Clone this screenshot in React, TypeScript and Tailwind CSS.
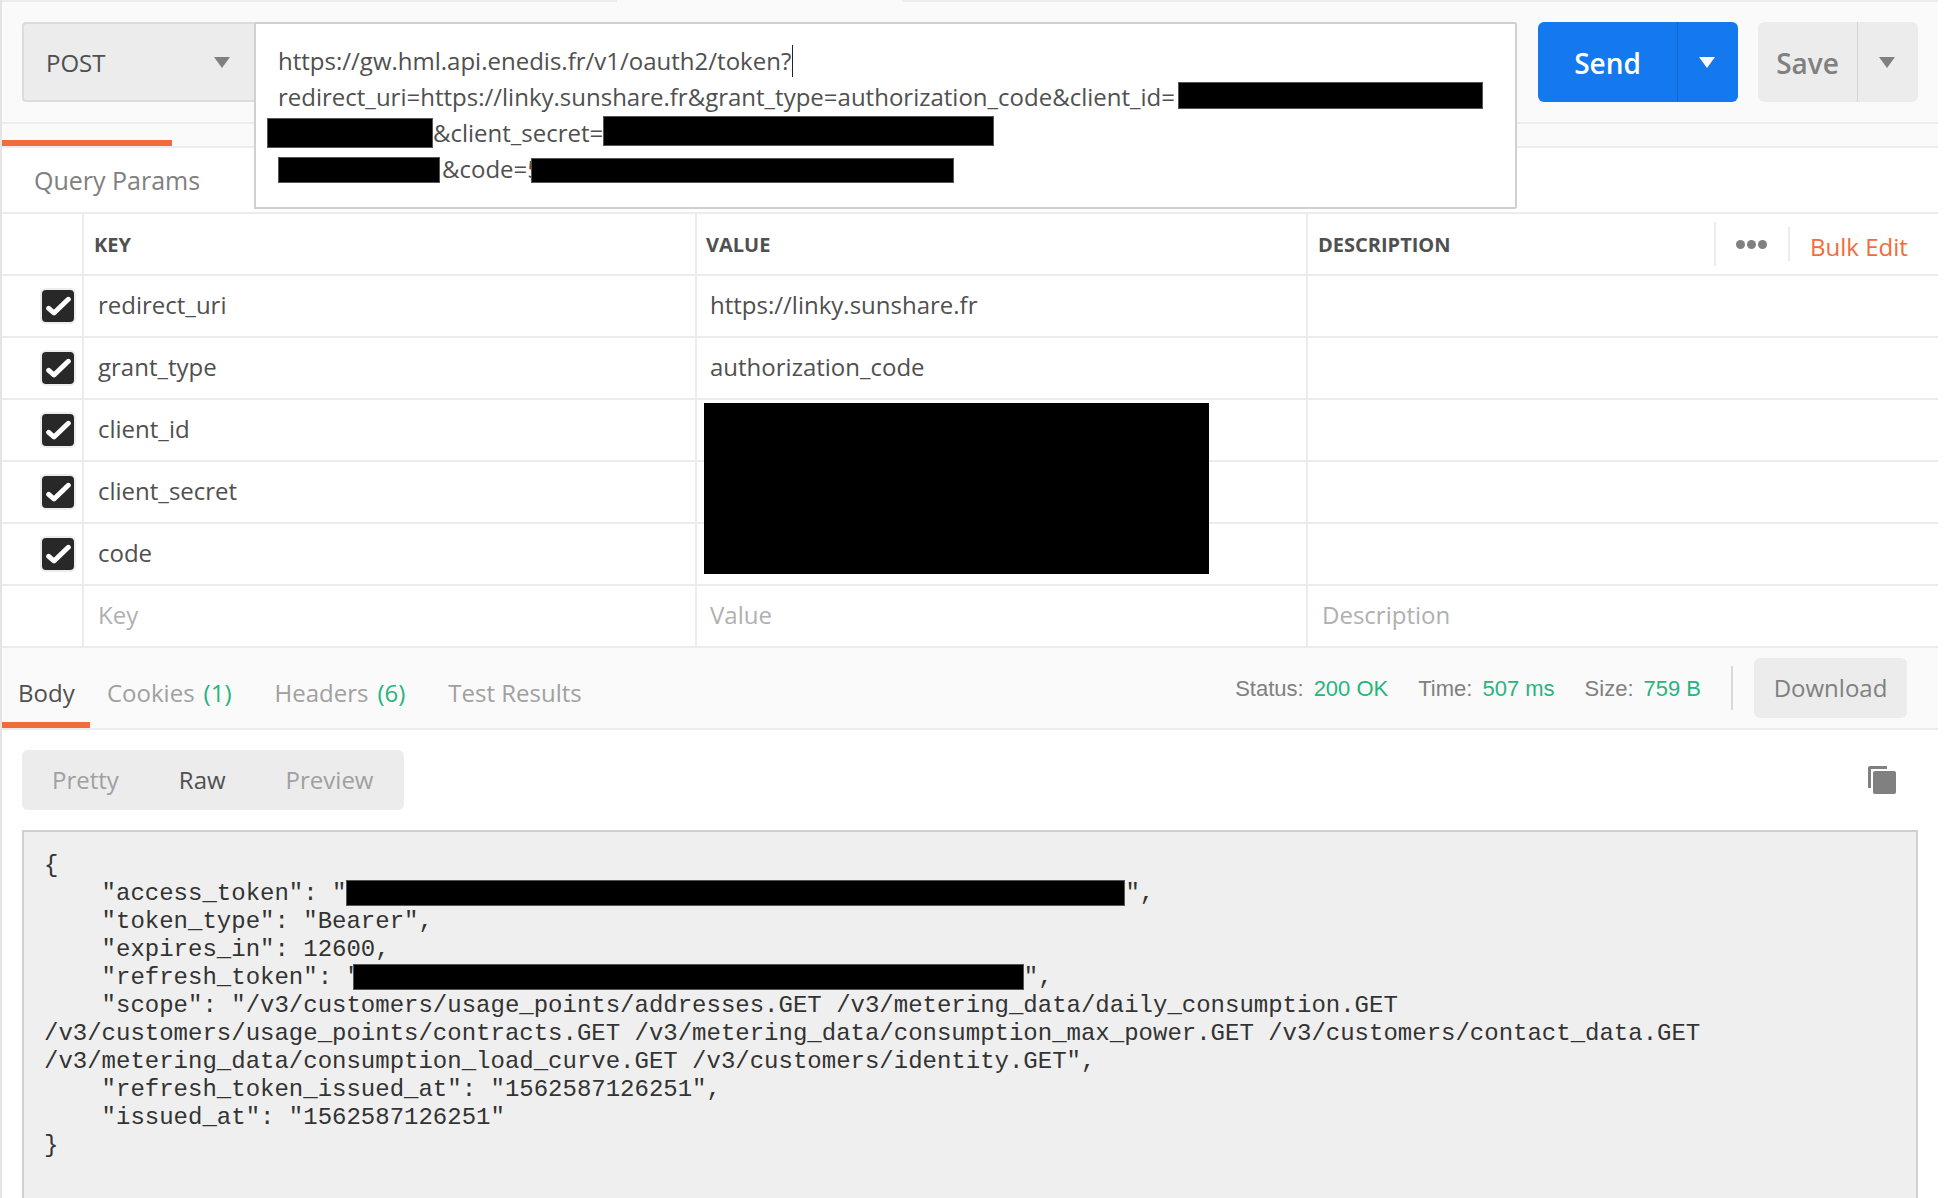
import React from 'react';

const rows = [
  { key: 'redirect_uri', value: 'https://linky.sunshare.fr' },
  { key: 'grant_type', value: 'authorization_code' },
  { key: 'client_id', value: '' },
  { key: 'client_secret', value: '' },
  { key: 'code', value: '' },
];

const responseLines = [
  '{',
  '    "access_token": "',
  '    "token_type": "Bearer",',
  '    "expires_in": 12600,',
  '    "refresh_token": "',
  '    "scope": "/v3/customers/usage_points/addresses.GET /v3/metering_data/daily_consumption.GET',
  '/v3/customers/usage_points/contracts.GET /v3/metering_data/consumption_max_power.GET /v3/customers/contact_data.GET',
  '/v3/metering_data/consumption_load_curve.GET /v3/customers/identity.GET",',
  '    "refresh_token_issued_at": "1562587126251",',
  '    "issued_at": "1562587126251"',
  '}',
];

const Caret = ({ color }: { color: string }) => (
  <svg width="16" height="11" viewBox="0 0 16 11" style={{ fill: color }}>
    <path d="M0 0h16L8 11z" />
  </svg>
);

const Check = () => (
  <span className="flex h-[36px] w-[36px] items-center justify-center rounded-[6px] border-2 border-[#ececec] bg-[#282828]">
    <svg width="26" height="22" viewBox="0 0 26 22" fill="none">
      <path d="M3.7 13.3L9 18L23.3 4.3" stroke="#fff" strokeWidth="5" strokeLinecap="round" strokeLinejoin="round" />
    </svg>
  </span>
);

const Bar = ({ className }: { className: string }) => (
  <span className={`relative inline-block shrink-0 border border-[#555] bg-black ${className}`} />
);

const App = () => {
  return (
    <div className="flex h-[1198px] w-[1944px] overflow-hidden bg-white font-['Open_Sans',sans-serif] text-[24px] text-[#505050]">
      <div className="w-[2px] shrink-0 bg-[#e4e4e4]" />
      <div className="w-[1936px] shrink-0">
        {/* top strip */}
        <div className="flex h-[2px]">
          <div className="w-[615px] bg-[#ececec]" />
          <div className="w-[285px] bg-[#fafafa]" />
          <div className="flex-1 bg-[#ececec]" />
        </div>

        {/* request bar */}
        <div className="flex h-[122px] items-start border-b-2 border-[#ececec] bg-[#fafafa] pl-[20px] pt-[20px]">
          <div className="flex h-[80px] w-[232px] items-center justify-between rounded-l-[4px] border-2 border-r-0 border-[#dcdcdc] bg-[#ececec] pl-[22px] pr-[24px]">
            <span className="pt-[2px] text-[#505050]">POST</span>
            <Caret color="#808080" />
          </div>
          <div className="relative z-10 mb-[-107px] h-[187px] w-[1263px] rounded-r-[2px] border-2 border-[#d0d0d0] bg-white pl-[22px] pt-[19px] leading-[36px]">
            <div className="flex h-[36px] items-center">
              https://gw.hml.api.enedis.fr/v1/oauth2/token?
              <span className="ml-[1px] h-[32px] w-[1px] bg-[#222]" />
            </div>
            <div className="flex h-[36px] items-center whitespace-nowrap">
              redirect_uri=https://linky.sunshare.fr&amp;grant_type=authorization_code&amp;client_id=
              <Bar className="ml-[3px] h-[27px] w-[305px] -translate-y-[2px]" />
            </div>
            <div className="ml-[-11px] flex h-[36px] items-center whitespace-nowrap">
              <Bar className="h-[30px] w-[166px]" />
              &amp;client_secret=
              <Bar className="h-[30px] w-[391px] -translate-y-[2px]" />
            </div>
            <div className="flex h-[36px] items-center whitespace-nowrap">
              <Bar className="h-[26px] w-[162px] translate-y-[1px]" />
              <span className="ml-[2px]">&amp;code=5</span>
              <Bar className="ml-[-10px] h-[25px] w-[423px] translate-y-[1px]" />
            </div>
          </div>
          <div className="ml-[21px] flex h-[80px] w-[200px] rounded-[6px] bg-[#1479ee] text-[28px] font-semibold text-white">
            <div className="flex w-[139px] items-center justify-center pt-[2px]">Send</div>
            <div className="flex flex-1 items-center justify-center border-l border-[#0f69d0] pr-[3px]">
              <Caret color="#fff" />
            </div>
          </div>
          <div className="ml-[20px] flex h-[80px] w-[160px] rounded-[6px] bg-[#ececec] text-[28px] font-semibold text-[#808080]">
            <div className="flex w-[99px] items-center justify-center pt-[2px]">Save</div>
            <div className="flex flex-1 items-center justify-center border-l border-[#d4d4d4] pr-[3px]">
              <Caret color="#808080" />
            </div>
          </div>
        </div>

        {/* params tab strip */}
        <div className="h-[24px] border-b-2 border-[#ececec] bg-[#fafafa] pt-[16px]">
          <div className="h-[6px] w-[170px] bg-[#f26b3a]" />
        </div>
        <div className="flex h-[66px] items-center border-b-2 border-[#ececec] pl-[32px] pt-[2px] text-[25px] text-[#808080]">
          Query Params
        </div>

        {/* params table */}
        <div className="flex h-[62px] border-b-2 border-[#ececec] text-[20px] font-bold">
          <div className="w-[82px] border-r-2 border-[#ececec]" />
          <div className="flex w-[611px] items-center pl-[10px] pt-[2px]">KEY</div>
          <div className="flex w-[611px] items-center border-l-2 border-[#ececec] pl-[9px] pt-[2px]">VALUE</div>
          <div className="flex flex-1 items-center border-l-2 border-[#ececec] pl-[10px]">
            <span className="w-[396px] pt-[2px]">DESCRIPTION</span>
            <span className="flex h-[44px] w-[74px] items-center justify-center gap-[2px] border-l-2 border-[#ececec] pr-[2px]">
              <span className="h-[9px] w-[9px] rounded-full bg-[#808080]" />
              <span className="h-[9px] w-[9px] rounded-full bg-[#808080]" />
              <span className="h-[9px] w-[9px] rounded-full bg-[#808080]" />
            </span>
            <span className="flex h-[34px] items-center border-l-2 border-[#ececec] pl-[20px] pt-[6px] text-[24px] font-normal text-[#f26b3a]">
              Bulk Edit
            </span>
          </div>
        </div>
        <div className="relative">
          {rows.map((row) => (
            <div key={row.key} className="flex h-[62px] border-b-2 border-[#ececec]">
              <div className="flex w-[82px] items-center justify-end border-r-2 border-[#ececec] pr-[6px]">
                <Check />
              </div>
              <div className="flex w-[611px] items-center pb-[2px] pl-[14px]">{row.key}</div>
              <div className="flex w-[611px] items-center border-l-2 border-[#ececec] pb-[2px] pl-[13px]">{row.value}</div>
              <div className="flex-1 border-l-2 border-[#ececec]" />
            </div>
          ))}
          <div className="flex h-[62px] border-b-2 border-[#ececec] text-[#b0b0b0]">
            <div className="w-[82px] border-r-2 border-[#ececec]" />
            <div className="flex w-[611px] items-center pb-[2px] pl-[14px]">Key</div>
            <div className="flex w-[611px] items-center border-l-2 border-[#ececec] pb-[2px] pl-[13px]">Value</div>
            <div className="flex flex-1 items-center border-l-2 border-[#ececec] pb-[2px] pl-[14px]">Description</div>
          </div>
          <div className="absolute left-[702px] top-[127px] h-[171px] w-[505px] bg-black" />
        </div>

        {/* response tabs */}
        <div className="flex h-[82px] items-stretch border-b-2 border-[#ececec] bg-[#fafafa]">
          <div className="flex w-[88px] items-center border-b-[6px] border-[#f26b3a] pl-[16px] pt-[16px]">Body</div>
          <div className="flex items-center pl-[17px] pt-[10px] text-[#a0a0a0]">
            Cookies <span className="ml-[9px] text-[#26b47f]">(1)</span>
          </div>
          <div className="flex items-center pl-[43px] pt-[10px] text-[#a0a0a0]">
            Headers <span className="ml-[9px] text-[#26b47f]">(6)</span>
          </div>
          <div className="flex items-center pl-[43px] pt-[10px] text-[#a0a0a0]">Test Results</div>
          <div className="ml-auto flex items-center font-['Liberation_Sans',sans-serif] text-[22px] text-[#808080]">
            <span>Status:</span>
            <span className="ml-[10px] text-[#26b47f]">200 OK</span>
            <span className="ml-[30px]">Time:</span>
            <span className="ml-[10px] text-[#26b47f]">507 ms</span>
            <span className="ml-[30px]">Size:</span>
            <span className="ml-[10px] text-[#26b47f]">759 B</span>
            <span className="ml-[30px] h-[44px] w-[2px] bg-[#d8d8d8]" />
            <span className="ml-[21px] mr-[31px] flex h-[60px] w-[153px] items-center justify-center rounded-[6px] bg-[#ececec] font-['Open_Sans',sans-serif] text-[24px]">
              Download
            </span>
          </div>
        </div>

        {/* response view switcher */}
        <div className="flex h-[100px] items-start justify-between pl-[20px] pr-[42px] pt-[20px]">
          <div className="flex h-[60px] w-[382px] items-center rounded-[6px] bg-[#ececec] text-[#a0a0a0]">
            <span className="ml-[30px]">Pretty</span>
            <span className="ml-[60px] text-[#505050]">Raw</span>
            <span className="ml-[60px]">Preview</span>
          </div>
          <svg width="28" height="28" viewBox="0 0 28 28" className="mt-[16px]" style={{ fill: '#808080' }}>
            <path d="M2 0h17v3H3v19H0V2a2 2 0 0 1 2-2z" />
            <rect x="5" y="5" width="23" height="23" rx="2" />
          </svg>
        </div>

        {/* response body */}
        <div className="ml-[20px] mr-[20px] h-[370px] border-2 border-[#d0d0d0] bg-[#efefef] pl-[20px] pt-[20px] font-['Liberation_Mono',monospace] text-[24px] leading-[28px] text-[#333]">
          {responseLines.map((line, i) => (
            <div key={i} className="flex h-[28px] items-center whitespace-pre">
              {line}
              {i === 1 && (
                <>
                  <Bar className="h-[26px] w-[779px] -translate-y-[1px]" />
                  <span>",</span>
                </>
              )}
              {i === 4 && (
                <>
                  <Bar className="ml-[-8px] h-[26px] w-[671px] -translate-y-[1px]" />
                  <span>",</span>
                </>
              )}
            </div>
          ))}
        </div>
      </div>
    </div>
  );
};

export default App;
